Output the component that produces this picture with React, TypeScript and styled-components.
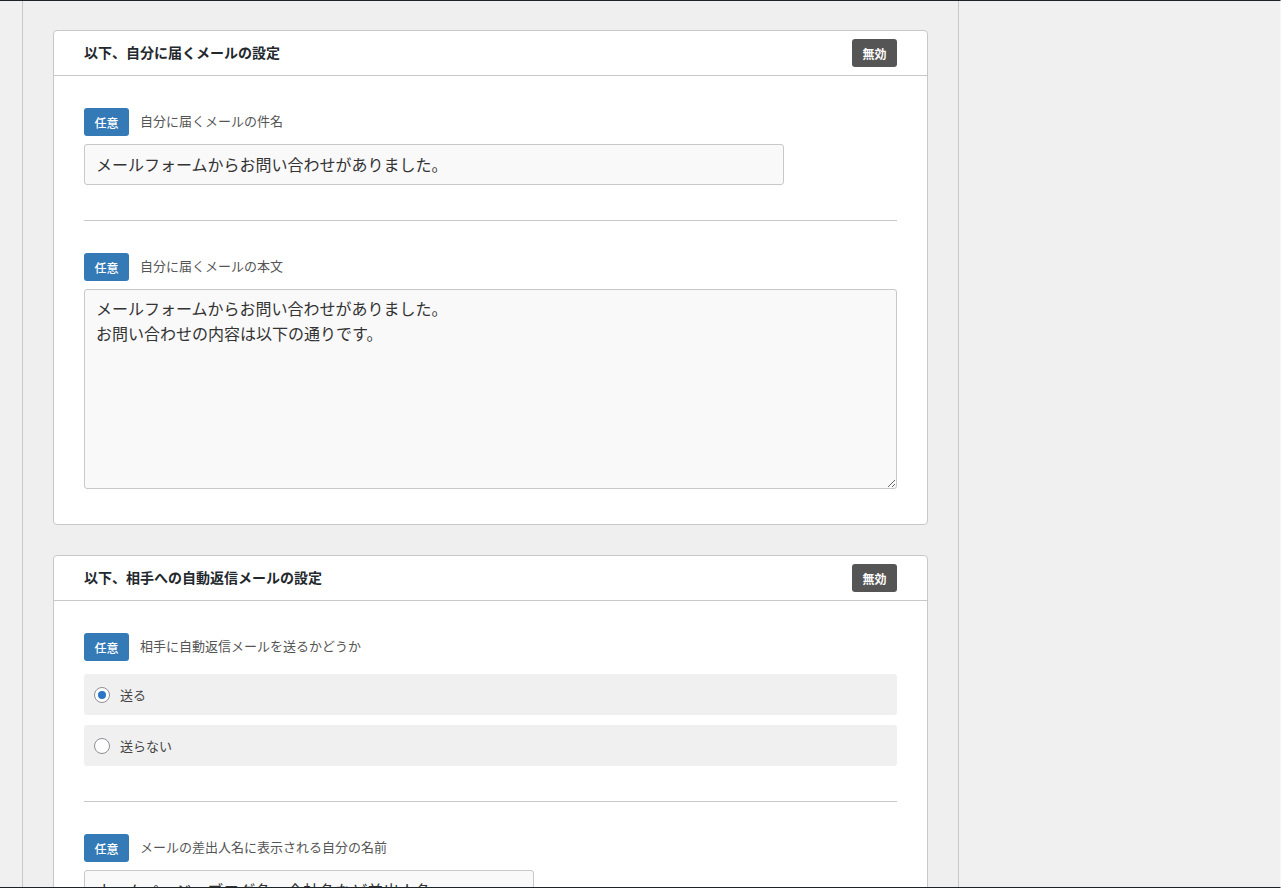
import { styled, createGlobalStyle } from 'styled-components';

const GlobalStyle = createGlobalStyle`
  html, body {
    margin: 0;
    padding: 0;
    background: #f0f0f0;
  }
  * {
    box-sizing: border-box;
  }
`;

type Field = {
  label: string;
  kind: 'input' | 'textarea' | 'radio';
  value?: string;
  options?: string[];
  checked?: number;
  width?: number;
};

type Section = {
  title: string;
  fields: Field[];
};

const sections: Section[] = [
  {
    title: '以下、自分に届くメールの設定',
    fields: [
      { label: '自分に届くメールの件名', kind: 'input', value: 'メールフォームからお問い合わせがありました。', width: 700 },
      {
        label: '自分に届くメールの本文',
        kind: 'textarea',
        value: 'メールフォームからお問い合わせがありました。\nお問い合わせの内容は以下の通りです。',
      },
    ],
  },
  {
    title: '以下、相手への自動返信メールの設定',
    fields: [
      { label: '相手に自動返信メールを送るかどうか', kind: 'radio', options: ['送る', '送らない'], checked: 0 },
      { label: 'メールの差出人名に表示される自分の名前', kind: 'input', value: 'ホームページ・ブログ名、会社名など差出人名', width: 450 },
    ],
  },
];

const FieldBlock = ({ field, name }: { field: Field; name: string }) => (
  <FieldRow>
    <LabelRow>
      <OptionalBadge>任意</OptionalBadge>
      <LabelText>{field.label}</LabelText>
    </LabelRow>
    {field.kind === 'input' && <TextInput $width={field.width ?? 700} defaultValue={field.value} />}
    {field.kind === 'textarea' && <TextArea defaultValue={field.value} />}
    {field.kind === 'radio' && (
      <RadioList>
        {field.options?.map((opt, i) => (
          <RadioOption key={opt}>
            <Radio type="radio" name={name} defaultChecked={i === field.checked} />
            <span>{opt}</span>
          </RadioOption>
        ))}
      </RadioList>
    )}
  </FieldRow>
);

export default function App() {
  return (
    <>
      <GlobalStyle />
      <Screen>
        <MainColumn>
          {sections.map((section, si) => (
            <Card key={section.title}>
              <CardHeader>
                <CardTitle>{section.title}</CardTitle>
                <DisableBadge>無効</DisableBadge>
              </CardHeader>
              <CardBody>
                {section.fields.map((field, fi) => (
                  <FieldBlock key={field.label} field={field} name={`f-${si}-${fi}`} />
                ))}
              </CardBody>
            </Card>
          ))}
        </MainColumn>
        <SidePanel />
      </Screen>
    </>
  );
}

const Screen = styled.div`
  display: flex;
  height: 888px;
  overflow: hidden;
  padding-left: 22px;
  background: #f0f0f0;
  border-top: 1px solid #1d2327;
  border-bottom: 1px solid #1d2327;
  border-right: 1px solid #f7f7f7;
  font-family: 'Noto Sans CJK JP', 'Noto Sans', sans-serif;
`;

const MainColumn = styled.main`
  display: flex;
  flex-direction: column;
  gap: 30px;
  width: 937px;
  flex-shrink: 0;
  padding: 29px 30px 0;
  border-left: 1px solid #c8c8c8;
  border-right: 1px solid #c8c8c8;
  background: #efefef;
`;

const SidePanel = styled.aside`
  flex: 1;
`;

const Card = styled.section`
  background: #fff;
  border: 1px solid #c8c8c8;
  border-radius: 4px;
  flex-shrink: 0;
`;

const CardHeader = styled.header`
  display: flex;
  align-items: center;
  justify-content: space-between;
  padding: 8px 30px;
  border-bottom: 1px solid #c8c8c8;
`;

const CardTitle = styled.h2`
  margin: 0 0 2px;
  font-size: 14px;
  line-height: 20px;
  font-weight: 700;
  color: #23282d;
`;

const DisableBadge = styled.span`
  display: inline-flex;
  align-items: center;
  justify-content: center;
  width: 45px;
  height: 28px;
  border-radius: 3px;
  background: #555;
  color: #fff;
  font-size: 12px;
  font-weight: 700;
`;

const CardBody = styled.div`
  display: flex;
  flex-direction: column;
  padding: 0 30px;
`;

const FieldRow = styled.div`
  display: flex;
  flex-direction: column;
  gap: 8px;
  padding: 32px 0 35px;
  border-bottom: 1px solid #c8c8c8;

  &:last-child {
    border-bottom: none;
  }
`;

const LabelRow = styled.div`
  display: flex;
  align-items: center;
  gap: 11px;
`;

const OptionalBadge = styled.span`
  display: inline-flex;
  align-items: center;
  justify-content: center;
  width: 45px;
  height: 28px;
  border-radius: 3px;
  background: #337ab7;
  color: #fff;
  font-size: 12px;
  font-weight: 500;
`;

const LabelText = styled.span`
  margin-bottom: 2px;
  font-size: 13px;
  line-height: 18px;
  color: #555;
`;

const TextInput = styled.input<{ $width: number }>`
  width: ${({ $width }) => $width}px;
  height: 41px;
  padding: 0 11px 1px;
  border: 1px solid #c8c8c8;
  border-radius: 3px;
  background: #f9f9f9;
  font-family: inherit;
  font-size: 16px;
  color: #333;
  outline: none;
`;

const TextArea = styled.textarea`
  width: 100%;
  height: 200px;
  padding: 6px 11px;
  border: 1px solid #c8c8c8;
  border-radius: 3px;
  background: #f9f9f9;
  font-family: inherit;
  font-size: 16px;
  line-height: 25px;
  color: #333;
  outline: none;
  resize: vertical;
`;

const RadioList = styled.div`
  display: flex;
  flex-direction: column;
  gap: 10px;
  margin-top: 5px;
`;

const RadioOption = styled.label`
  display: flex;
  align-items: center;
  gap: 10px;
  height: 41px;
  padding: 0 10px 1px;
  border-radius: 3px;
  background: #f0f0f0;
  font-size: 13px;
  color: #444;
`;

const Radio = styled.input`
  appearance: none;
  margin: 1px 0 0;
  width: 16px;
  height: 16px;
  border: 1px solid #8c8f94;
  border-radius: 50%;
  background: #fff;
  display: grid;
  place-items: center;

  &:checked::before {
    content: '';
    width: 8px;
    height: 8px;
    border-radius: 50%;
    background: #2b75c4;
  }
`;
